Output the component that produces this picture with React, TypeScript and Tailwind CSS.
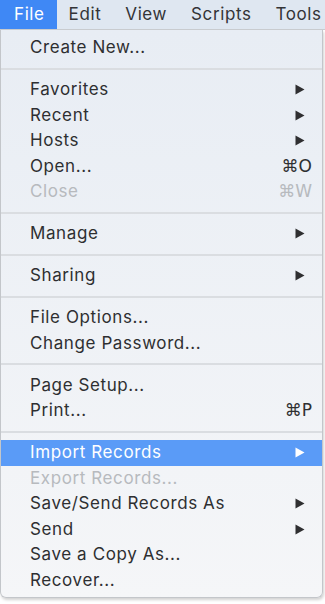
import React from 'react';

type Entry =
  | { kind: 'sep' }
  | { kind: 'item'; label: string; shortcut?: string; submenu?: boolean; disabled?: boolean; active?: boolean };

const MENU_BAR = ['File', 'Edit', 'View', 'Scripts', 'Tools'];

const ENTRIES: Entry[] = [
  { kind: 'item', label: 'Create New...' },
  { kind: 'sep' },
  { kind: 'item', label: 'Favorites', submenu: true },
  { kind: 'item', label: 'Recent', submenu: true },
  { kind: 'item', label: 'Hosts', submenu: true },
  { kind: 'item', label: 'Open...', shortcut: '⌘O' },
  { kind: 'item', label: 'Close', shortcut: '⌘W', disabled: true },
  { kind: 'sep' },
  { kind: 'item', label: 'Manage', submenu: true },
  { kind: 'sep' },
  { kind: 'item', label: 'Sharing', submenu: true },
  { kind: 'sep' },
  { kind: 'item', label: 'File Options...' },
  { kind: 'item', label: 'Change Password...' },
  { kind: 'sep' },
  { kind: 'item', label: 'Page Setup...' },
  { kind: 'item', label: 'Print...', shortcut: '⌘P' },
  { kind: 'sep' },
  { kind: 'item', label: 'Import Records', submenu: true, active: true },
  { kind: 'item', label: 'Export Records...', disabled: true },
  { kind: 'item', label: 'Save/Send Records As', submenu: true },
  { kind: 'item', label: 'Send', submenu: true },
  { kind: 'item', label: 'Save a Copy As...' },
  { kind: 'item', label: 'Recover...' },
];

const Arrow = ({ light }: { light?: boolean }) => (
  <svg width="10" height="11" viewBox="0 0 10 11" className="mr-[7px]">
    <path d="M0.5 0.5 L9.5 5.5 L0.5 10.5 Z" fill={light ? '#ffffff' : '#2f2f31'} />
  </svg>
);

export default function App() {
  return (
    <div className="w-[325px] h-[604px] bg-white overflow-hidden font-['Inter','DejaVu_Sans',sans-serif] text-[17px] tracking-[0.6px]">
      <div className="h-[30px] flex items-center bg-[#dfe7f1] border-b border-[#c9ccd0] text-[#333437]">
        {MENU_BAR.map((m, i) => (
          <div
            key={m}
            className={
              i === 0
                ? 'h-full flex items-center pl-[14px] pr-[12px] bg-[#3f88f5] text-white'
                : 'h-full flex items-center px-[12px]'
            }
          >
            {m}
          </div>
        ))}
      </div>

      <div className="w-[323px] h-[568px] rounded-b-[6px] border-l border-r border-b border-[#c3c6ca] bg-gradient-to-b from-[#e8edf4] to-[#f5f6f8] pt-[5px] shadow-[1px_2px_3px_rgba(0,0,0,0.18)]">
        {ENTRIES.map((e, i) =>
          e.kind === 'sep' ? (
            <div key={i} className="h-[16.5px] flex items-center">
              <div className="w-full h-[2px] bg-[#dadde1]" />
            </div>
          ) : (
            <div
              key={i}
              className={
                'h-[25.5px] flex items-center justify-between pl-[29px] pr-[10px] ' +
                (e.active ? 'bg-[#5a9bf7] text-white' : e.disabled ? 'text-[#b7babe]' : 'text-[#2e2f31]')
              }
            >
              <span>{e.label}</span>
              {e.submenu && <Arrow light={e.active} />}
              {e.shortcut && <span className="font-['DejaVu_Sans','Inter',sans-serif] text-[17px] tracking-normal">{e.shortcut}</span>}
            </div>
          )
        )}
      </div>
    </div>
  );
}
